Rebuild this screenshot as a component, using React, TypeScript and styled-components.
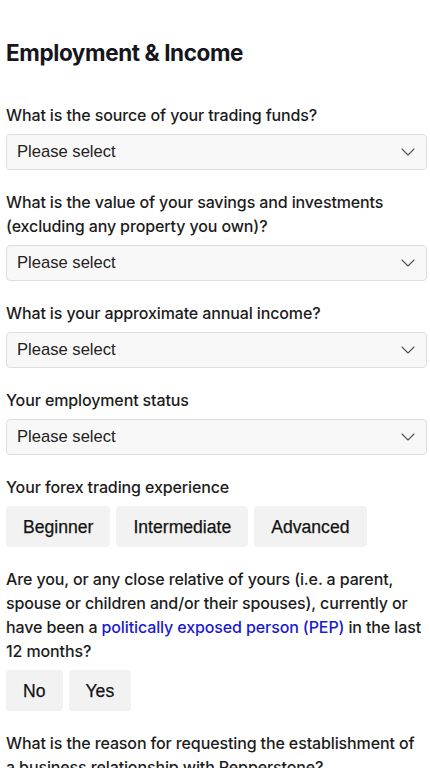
import React from "react";
import styled, { createGlobalStyle } from "styled-components";

const Global = createGlobalStyle`
  * { box-sizing: border-box; }
  body { margin: 0; background: #fff; font-family: Inter, "Noto Sans", sans-serif; color: #1c1c1c; }
`;

const Page = styled.div`
  padding: 38px 3px 0 6px;
  display: flex;
  flex-direction: column;
`;

const Title = styled.h1`
  margin: 0 0 35px 0;
  font-family: Inter, sans-serif;
  font-size: 22.5px;
  line-height: 30px;
  font-weight: 700;
  letter-spacing: -0.4px;
  color: #16161c;
`;

const Form = styled.div`
  display: flex;
  flex-direction: column;
  gap: 20px;
`;

const Field = styled.div`
  display: flex;
  flex-direction: column;
  gap: 7px;
`;

const Label = styled.div`
  font-family: Inter, sans-serif;
  font-size: 16px;
  line-height: 24px;
  font-weight: 500;
  letter-spacing: -0.12px;
  white-space: nowrap;
  color: #1c1c1c;
`;

const Link = styled.a`
  color: #1a1ad0;
  text-decoration: none;
`;

const SelectBox = styled.div`
  height: 36px;
  border: 1px solid #dedede;
  border-radius: 4px;
  background: #f8f8f8;
  display: flex;
  align-items: center;
  justify-content: space-between;
  padding: 0 11px 0 10px;
  font-family: "Liberation Sans", Arial, sans-serif;
  font-size: 16.6px;
  color: #222;
`;

const Chevron = () => (
  <svg width="14" height="8" viewBox="0 0 14 8" fill="none">
    <path d="M1 1l6 6 6-6" stroke="#555" strokeWidth="1.1" strokeLinecap="round" strokeLinejoin="round" />
  </svg>
);

const Choices = styled.div`
  display: flex;
  gap: 6px;
`;

const Choice = styled.button`
  height: 41px;
  padding: 1px 17px 0;
  border: none;
  border-radius: 4px;
  background: #f2f2f2;
  font-family: "Liberation Sans", Arial, sans-serif;
  font-size: 17.6px;
  font-weight: 500;
  color: #141414;
  -webkit-text-stroke: 0.25px #141414;
  cursor: pointer;
`;

const Select = ({ text }: { text: string }) => (
  <SelectBox>
    <span>{text}</span>
    <Chevron />
  </SelectBox>
);

export default function App() {
  return (
    <>
      <Global />
      <Page>
        <Title>Employment &amp; Income</Title>
        <Form>
          <Field>
            <Label>What is the source of your trading funds?</Label>
            <Select text="Please select" />
          </Field>
          <Field>
            <Label>
              What is the value of your savings and investments
              <br />
              (excluding any property you own)?
            </Label>
            <Select text="Please select" />
          </Field>
          <Field>
            <Label>What is your approximate annual income?</Label>
            <Select text="Please select" />
          </Field>
          <Field>
            <Label>Your employment status</Label>
            <Select text="Please select" />
          </Field>
          <Field>
            <Label>Your forex trading experience</Label>
            <Choices>
              <Choice>Beginner</Choice>
              <Choice>Intermediate</Choice>
              <Choice>Advanced</Choice>
            </Choices>
          </Field>
          <Field>
            <Label>
              Are you, or any close relative of yours (i.e. a parent,
              <br />
              spouse or children and/or their spouses), currently or
              <br />
              have been a <Link href="#">politically exposed person (PEP)</Link> in the last
              <br />
              12 months?
            </Label>
            <Choices>
              <Choice>No</Choice>
              <Choice>Yes</Choice>
            </Choices>
          </Field>
          <Field>
            <Label>
              What is the reason for requesting the establishment of
              <br />
              a business relationship with Pepperstone?
            </Label>
          </Field>
        </Form>
      </Page>
    </>
  );
}
